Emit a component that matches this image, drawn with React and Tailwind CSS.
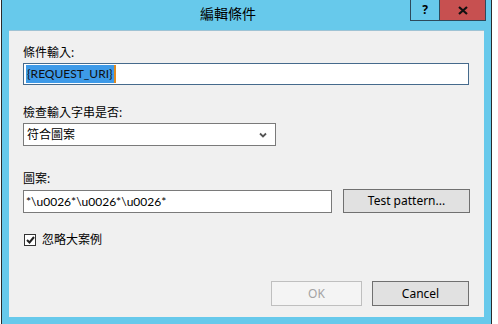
export default function App() {
  const f = { fontFamily: '"Noto Sans", "Noto Sans CJK TC", sans-serif' };
  const lat = { fontFamily: 'Lato, "Noto Sans CJK TC", sans-serif' };
  return (
    <div className="w-[498px] h-[324px] bg-white flex overflow-hidden" style={f}>
      <div className="ml-[1px] w-[491px] h-[324px] border-x border-[#2b2b2b] bg-[#67c9eb] flex flex-col">
        <div className="h-[30px] flex items-start">
          <div className="pl-[198px] pt-[5px] text-[14px] leading-[18px] text-black">編輯條件</div>
          <div className="ml-auto mr-[5px] flex h-[21px] border border-[#2d4a5c] border-t-0">
            <div className="w-[28px] h-full flex items-center justify-center text-[12px] font-bold text-black leading-none">?</div>
            <div className="w-[46px] h-full bg-[#c75050] border-l border-[#2d4a5c] flex items-center justify-center">
              <svg width="10" height="9" viewBox="0 0 10 9">
                <path d="M1 1 L9 8 M9 1 L1 8" stroke="#111" strokeWidth="2.2" />
              </svg>
            </div>
          </div>
        </div>
        <div className="mx-[7px] h-[287px] bg-[#f0f0f0] border-t border-[#9fc3d4] pl-[14px] pt-[14px] text-[12px] text-black flex flex-col">
          <div className="leading-[16px]">條件輸入:</div>
          <div className="mt-[2px] w-[446px] h-[22px] bg-white border border-[#456a8c] flex items-center pl-[2px]">
            <span className="bg-[#3d9ae8] text-[#101010] leading-[18px] px-[1px] border-r-2 border-[#e08a20]" style={lat}>{'{REQUEST_URI}'}</span>
          </div>
          <div className="mt-[20px] leading-[16px]">檢查輸入字串是否:</div>
          <div className="mt-[2px] w-[253px] h-[23px] bg-white border border-[#7a7a7a] flex items-center pl-[3px] pr-[8px]">
            <span className="leading-[16px]">符合圖案</span>
            <svg className="ml-auto" width="8" height="6" viewBox="0 0 8 6">
              <path d="M1 1.5 L4 4.5 L7 1.5" stroke="#555" strokeWidth="1.8" fill="none" />
            </svg>
          </div>
          <div className="mt-[25px] leading-[16px]">圖案:</div>
          <div className="mt-[2px] flex items-start">
            <div className="mt-[1px] w-[309px] h-[23px] bg-white border border-[#7a7a7a] flex items-center pl-[2px]">
              <span className="leading-[16px]" style={lat}>{'*\\u0026*\\u0026*\\u0026*'}</span>
            </div>
            <div className="ml-[11px] w-[127px] h-[24px] bg-[#e1e1e1] border border-[#707070] flex items-center justify-center leading-[16px]">
              Test pattern...
            </div>
          </div>
          <div className="mt-[19px] flex items-center h-[16px]">
            <div className="ml-[1px] w-[12px] h-[12px] bg-white border border-[#333] flex items-center justify-center">
              <svg width="9" height="8" viewBox="0 0 9 8">
                <path d="M1 4 L3.5 6.5 L8 1" stroke="#222" strokeWidth="2" fill="none" />
              </svg>
            </div>
            <span className="ml-[6px] leading-[16px]">忽略大案例</span>
          </div>
          <div className="mt-[33px] flex pl-[248px]">
            <div className="w-[91px] h-[25px] bg-[#f4f4f4] border border-[#bfbfbf] text-[#a3a3a3] flex items-center justify-center">OK</div>
            <div className="ml-[10px] w-[97px] h-[25px] bg-[#e1e1e1] border border-[#707070] flex items-center justify-center">Cancel</div>
          </div>
        </div>
      </div>
    </div>
  );
}
